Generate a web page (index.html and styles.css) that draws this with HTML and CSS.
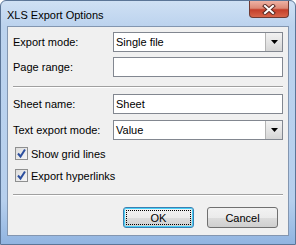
FILE: index.html
```html
<!DOCTYPE html>
<html>
  <head>
    <title>XLS Export Options</title>
    <link rel="stylesheet" href="styles.css">
  </head>
  <body>
    <div class="window">
      <div class="titlebar">
        <span class="title">XLS Export Options</span>
        <div class="close">
          <svg width="14" height="11" viewBox="0 0 14 11">
            <path d="M3 2 L11 9 M11 2 L3 9" stroke="#5a2a24" stroke-width="4" stroke-linecap="square" />
            <path d="M3 2 L11 9 M11 2 L3 9" stroke="#ffffff" stroke-width="2" stroke-linecap="square" />
          </svg>
        </div>
      </div>
      <div class="client">
        <div class="form-group">
          <label>Export mode:</label>
          <div class="combo">
            <span class="value">Single file</span>
            <span class="arrow"><svg width="7" height="4" viewBox="0 0 7 4"><path d="M0 0 H7 L3.5 4 Z" fill="#000" /></svg></span>
          </div>
        </div>
        <div class="form-group">
          <label>Page range:</label>
          <div class="textbox"></div>
        </div>
        <div class="separator first"></div>
        <div class="form-group wide">
          <label>Sheet name:</label>
          <div class="textbox">Sheet</div>
        </div>
        <div class="form-group">
          <label>Text export mode:</label>
          <div class="combo">
            <span class="value">Value</span>
            <span class="arrow"><svg width="7" height="4" viewBox="0 0 7 4"><path d="M0 0 H7 L3.5 4 Z" fill="#000" /></svg></span>
          </div>
        </div>
        <div class="check first-check">
          <span class="box"><svg width="11" height="11" viewBox="0 0 11 11"><path d="M2 5.5 L4.5 8.5 L9 1.5" stroke="#2c4f9e" stroke-width="2" fill="none" /></svg></span>
          <span>Show grid lines</span>
        </div>
        <div class="check">
          <span class="box"><svg width="11" height="11" viewBox="0 0 11 11"><path d="M2 5.5 L4.5 8.5 L9 1.5" stroke="#2c4f9e" stroke-width="2" fill="none" /></svg></span>
          <span>Export hyperlinks</span>
        </div>
        <div class="separator last"></div>
        <div class="buttons">
          <button class="btn default"><span class="focus">OK</span></button>
          <button class="btn">Cancel</button>
        </div>
      </div>
    </div>
  </body>
</html>
```

FILE: styles.css
```css
body {
  margin: 0;
  background: #ffffff;
  font-family: "Liberation Sans", Arial, sans-serif;
  font-size: 11px;
  color: #000;
}

.window {
  width: 296px;
  height: 245px;
  box-sizing: border-box;
  border: 1px solid #5b7597;
  border-radius: 6px 6px 0 0;
  background: linear-gradient(to bottom, #cfe0f4 0px, #bcd3ee 25px, #b6cfed 200px, #8fb3e0 245px);
  display: flex;
  flex-direction: column;
}

.titlebar {
  height: 25px;
  display: flex;
  align-items: flex-start;
}

.title {
  margin: 8px 0 0 6px;
  font-size: 11px;
  color: #000;
}

.close {
  margin-left: auto;
  margin-right: 6px;
  width: 40px;
  height: 17px;
  box-sizing: border-box;
  border: 1px solid #6f3a33;
  border-top: none;
  border-radius: 0 0 4px 4px;
  background: linear-gradient(to bottom, #eeb2a4 0%, #dc8a77 45%, #c43f2a 55%, #d8654a 100%);
  display: flex;
  align-items: center;
  justify-content: center;
}

.client {
  margin: 0 6px;
  height: 210px;
  box-sizing: border-box;
  border: 1px solid #8396b0;
  background: #f0f0f0;
  padding: 5px 5px 0 5px;
  display: flex;
  flex-direction: column;
}

.form-group {
  display: flex;
  align-items: center;
  height: 20px;
  margin-bottom: 5px;
}

.form-group.wide {
  margin-bottom: 6px;
}

.form-group label {
  width: 100px;
}

.combo,
.textbox {
  width: 170px;
  height: 20px;
  box-sizing: border-box;
  border: 1px solid #828790;
  background: #fff;
  display: flex;
  align-items: center;
  padding-left: 2px;
}

.combo .value {
  flex: 1;
}

.combo .arrow {
  width: 17px;
  height: 18px;
  box-sizing: border-box;
  border-left: 1px solid #b4b4b4;
  background: linear-gradient(to bottom, #f2f2f2, #d6d6d6);
  display: flex;
  align-items: center;
  justify-content: center;
}

.separator {
  height: 1px;
  flex-shrink: 0;
  background: #a0a0a0;
  border-bottom: 1px solid #ffffff;
}

.separator.first {
  margin: 4px 0 6px 0;
}

.separator.last {
  margin: 12px 0 11px 0;
}

.check {
  display: flex;
  align-items: center;
  height: 13px;
  margin: 9px 0 0 2px;
}

.check.first-check {
  margin-top: 2px;
}

.check .box {
  width: 13px;
  height: 13px;
  box-sizing: border-box;
  border: 1px solid #8e8f8f;
  background: linear-gradient(to bottom right, #dcdcdc, #f6f6f6);
  margin-right: 3px;
  display: flex;
  align-items: center;
  justify-content: center;
}

.buttons {
  display: flex;
  justify-content: flex-end;
  gap: 13px;
  margin-right: 5px;
}

.btn {
  width: 71px;
  height: 21px;
  box-sizing: border-box;
  border: 1px solid #707070;
  border-radius: 3px;
  background: linear-gradient(to bottom, #f2f2f2 0%, #ebebeb 50%, #dddddd 51%, #cfcfcf 100%);
  font-family: "Liberation Sans", Arial, sans-serif;
  font-size: 11px;
  color: #000;
  padding: 0;
}

.btn.default {
  border-color: #3c7fb1;
  box-shadow: inset 0 0 0 1px #48d0f8;
  padding: 2px;
}

.btn .focus {
  display: flex;
  align-items: center;
  justify-content: center;
  height: 100%;
  box-sizing: border-box;
  border: 1px dotted #000;
}
```
